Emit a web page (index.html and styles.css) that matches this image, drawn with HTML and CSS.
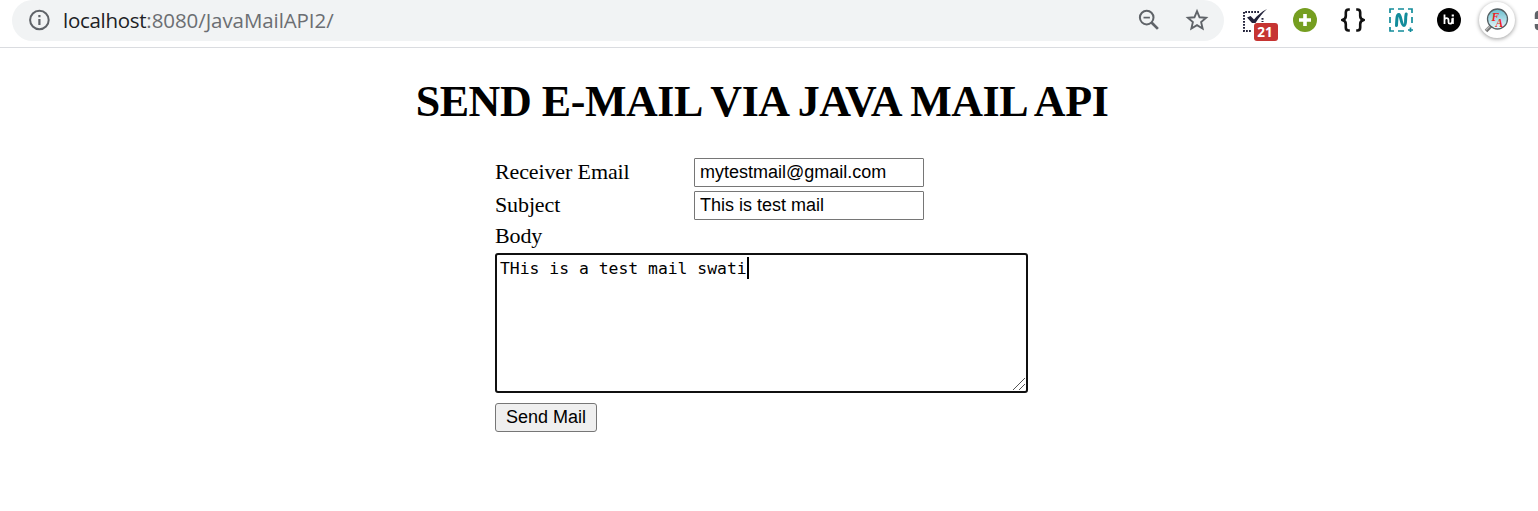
FILE: index.html
```
<!DOCTYPE html>
<html lang="en">
<head>
<meta charset="utf-8">
<title>Send E-Mail</title>
<link rel="stylesheet" href="styles.css">
</head>
<body>
<header class="toolbar">
  <div class="address">
    <svg class="info" width="22" height="22" viewBox="0 0 22 22"><circle cx="11.4" cy="11" r="9.3" fill="none" stroke="#5f6368" stroke-width="2"/><path d="M11.4 6v2.3M11.4 10v6" stroke="#5f6368" stroke-width="2.2"/></svg>
    <span class="url"><span class="host">localhost</span><span class="path">:8080/JavaMailAPI2/</span></span>
    <svg class="zoom" width="22" height="22" viewBox="0 0 22 22"><circle cx="8.7" cy="8.6" r="6.8" fill="none" stroke="#5f6368" stroke-width="2"/><path d="M5.5 8.6h6.4" stroke="#5f6368" stroke-width="1.7"/><path d="M13.5 13.5l6.4 6.4" stroke="#5f6368" stroke-width="2.7"/></svg>
    <svg class="star" width="24" height="24" viewBox="0 0 24 24"><path d="M12 3.2l2.55 6.05 6.55.56-4.97 4.3 1.49 6.4L12 17.1l-5.62 3.41 1.49-6.4-4.97-4.3 6.55-.56z" fill="none" stroke="#5f6368" stroke-width="1.9"/></svg>
  </div>
  <div class="extensions">
    <div class="task">
      <svg width="28" height="26" viewBox="0 0 28 26"><path d="M17 3H2v19h8M20.500 9v4" fill="none" stroke="#23233b" stroke-width="2" stroke-dasharray="1.8 1.2"/><path d="M5 8.5l3.6-1.500 3.400 3.500C15.500 6.500 19 3 25 0c-4.500 4-7.500 8-11.500 14h-3.500z" fill="#23233b"/></svg>
      <span class="count">21</span>
    </div>
    <svg width="24" height="24" viewBox="0 0 24 24"><circle cx="12" cy="12" r="12" fill="#759e20"/><path d="M12 6v12M6 12h12" stroke="#fff" stroke-width="3.6"/></svg>
    <svg width="24" height="24" viewBox="0 0 24 24"><path d="M8.8 1.5H7.6Q4.800 1.500 4.800 4.500V8Q4.800 11.300 1.200 12 4.800 12.700 4.800 16v3.500q0 3 2.800 3h1.200M15.200 1.500h1.200q2.800 0 2.800 3V8q0 3.300 3.600 4-3.600.7-3.600 4v3.500q0 3-2.800 3h-1.200" fill="none" stroke="#111" stroke-width="2.600" stroke-linejoin="round"/></svg>
    <svg width="24" height="24" viewBox="0 0 24 24"><path d="M1 5V1h4M9 1h6M19 1h4v4M23 9v6M1 9v6M1 19v4h4M9 23h6M19 22h5M21.500 19.500v5" fill="none" stroke="#128c9b" stroke-width="1.700"/><path d="M7.500 17.500C7.800 13 7.500 6 10 6.500C12 7 12 17.500 15 17.500C17.500 17.500 16 10 17.200 6" fill="none" stroke="#128c9b" stroke-width="3" stroke-linecap="round" stroke-linejoin="round"/></svg>
    <svg width="24" height="24" viewBox="0 0 24 24"><circle cx="12" cy="12" r="12" fill="#000"/><path d="M7.500 6.500v9.500M7.500 12.200q0-2 2-2t2 2v2q0 1.500 1.500 1.500 2.200 0 2.200-2.500v-3" fill="none" stroke="#fff" stroke-width="1.800"/><path d="M16 9.800v6.200" stroke="#fff" stroke-width="1.600"/><path d="M14.700 6.500h2.200v2h-2.200z" fill="#fff"/></svg>
    <div class="avatar">
      <svg width="26" height="26" viewBox="0 0 26 26"><path d="M9 17l-7 7" stroke="#777" stroke-width="3.600"/><path d="M8 17l-6 6" stroke="#bbb" stroke-width="1.300"/><defs><linearGradient id="lens" x2="0" y2="1"><stop stop-color="#69bdce"/><stop offset="1" stop-color="#eaf8fc"/></linearGradient></defs><circle cx="13.500" cy="12" r="10" fill="url(#lens)" stroke="#555f63" stroke-width="1.300"/><text class="fa" x="7.500" y="13.500">F</text><text class="fa" x="11.500" y="20">A</text></svg>
    </div>
    <svg class="clipped" width="24" height="24" viewBox="0 0 24 24"><path d="M9 5H7Q5 5 5 7V11M5 16v2q0 2 2 2h2" fill="none" stroke="#5f6368" stroke-width="4.500"/></svg>
  </div>
</header>
<main class="page">
  <h1 class="title">SEND E-MAIL VIA JAVA MAIL API</h1>
  <form class="form">
    <label class="label" for="to">Receiver Email</label><input class="field" id="to" value="mytestmail@gmail.com">
    <label class="label" for="subject">Subject</label><input class="field" id="subject" value="This is test mail">
    <label class="label body-label">Body</label>
    <div class="message"><span class="message-text">THis is a test mail swati</span><span class="caret"></span>
      <svg class="grip" width="14" height="14" viewBox="0 0 14 14"><path d="M1 13L13 1M7 13l6-6" stroke="#555" stroke-width="1"/></svg>
    </div>
    <button class="send" type="button">Send Mail</button>
  </form>
</main>
</body>
</html>
```
FILE: styles.css
```
* { box-sizing: border-box; }
body { margin: 0; background: #fff; color: #000; overflow: hidden; height: 511px; }
svg { display: block; flex: none; }
.toolbar { display: flex; height: 48px; border-bottom: 1px solid #dadce0; overflow: hidden; }
.address { display: flex; align-items: center; flex: none; width: 1212px; height: 41px; margin-left: 12px; padding: 0 15px 1px 16px; background: #f1f3f4; border-radius: 20.5px; }
.url { margin-left: 13px; font: 20.5px/30px "Open Sans", sans-serif; white-space: nowrap; }
.host { color: #202124; letter-spacing: -.28px; }
.path { color: #6b6e72; letter-spacing: -.08px; }
.zoom { margin-left: auto; }
.star { margin-left: 25px; }
.extensions { display: flex; align-items: center; gap: 24px; height: 40px; margin-left: 19px; }
.task { position: relative; width: 26px; height: 24px; flex: none; }
.task svg { margin-top: 1px; margin-left: -1px; }
.count { position: absolute; left: 11px; top: 15px; width: 24px; height: 18px; border-radius: 3px; background: #c63432; color: #fff; font: bold 13.5px/19px "Open Sans", sans-serif; text-align: center; text-indent: -2px; }
.avatar { display: flex; align-items: center; justify-content: center; flex: none; width: 36px; height: 36px; margin: 0 -6px; border-radius: 50%; background: #fff; box-shadow: 0 1px 4px #0006; }
.fa { fill: #ef1d20; font: italic bold 11.5px "Liberation Serif", serif; }
.clipped { margin-left: -1px; }
.title { margin: 0; padding: 29px 14px 0 0; text-align: center; font: bold 44px/50px "Liberation Serif", serif; letter-spacing: -.44px; font-kerning: normal; white-space: nowrap; }
.form { display: grid; grid-template-columns: 199px 334px; grid-template-rows: 29px 29px 25px 140px 29px; row-gap: 4px; width: 533px; margin: 31px 0 0 495px; }
.label { font: 22px/27px "Liberation Serif", serif; letter-spacing: -.12px; }
.field { width: 230px; height: 29px; margin: 0; padding: 0 5px 1px; border: 1px solid #767676; border-radius: 1px; font: 18px "Liberation Sans", sans-serif; color: #000; background: #fff; }
.body-label { grid-column: 1 / 3; line-height: 24px; }
.message { position: relative; grid-column: 1 / 3; display: flex; align-items: flex-start; padding: 2px 3px; border: 2px solid #101010; border-radius: 3px; font: 16.4px/24px "DejaVu Sans Mono", monospace; }
.caret { width: 2px; height: 22px; background: #000; }
.grip { position: absolute; right: 0; bottom: 0; }
.send { width: 102px; height: 29px; margin: 6px 0 0; padding: 0 0 1px; border: 1px solid #767676; border-radius: 3px; background: #efefef; color: #000; font: 18px "Liberation Sans", sans-serif; }
```
